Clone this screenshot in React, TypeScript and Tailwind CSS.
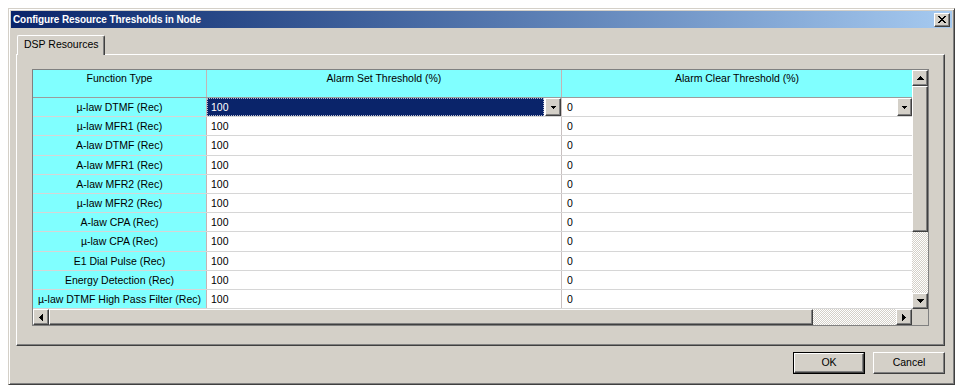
import React from "react";

const rows = [
  "µ-law DTMF (Rec)",
  "µ-law MFR1 (Rec)",
  "A-law DTMF (Rec)",
  "A-law MFR1 (Rec)",
  "A-law MFR2 (Rec)",
  "µ-law MFR2 (Rec)",
  "A-law CPA (Rec)",
  "µ-law CPA (Rec)",
  "E1 Dial Pulse (Rec)",
  "Energy Detection (Rec)",
  "µ-law DTMF High Pass Filter (Rec)",
];

const raised =
  "bg-[#d4d0c8] border border-t-white border-l-white border-r-[#404040] border-b-[#404040] shadow-[inset_-1px_-1px_0_#808080]";

function PixTri({ dir, size }: { dir: "up" | "down" | "left" | "right"; size: number }) {
  const rects: React.ReactNode[] = [];
  const base = size * 2 - 1;
  for (let i = 0; i < size; i++) {
    const len = dir === "up" || dir === "left" ? 2 * i + 1 : base - 2 * i;
    const off = (base - len) / 2;
    if (dir === "up" || dir === "down") {
      rects.push(<rect key={i} x={off} y={i} width={len} height={1} />);
    } else {
      rects.push(<rect key={i} x={i} y={off} width={1} height={len} />);
    }
  }
  const w = dir === "up" || dir === "down" ? base : size;
  const h = dir === "up" || dir === "down" ? size : base;
  return (
    <svg width={w} height={h} viewBox={`0 0 ${w} ${h}`} shapeRendering="crispEdges" fill="#000">
      {rects}
    </svg>
  );
}

function CloseX() {
  const pts = [
    [0, 0, 2], [6, 0, 2],
    [1, 1, 2], [5, 1, 2],
    [2, 2, 4],
    [3, 3, 2],
    [2, 4, 4],
    [1, 5, 2], [5, 5, 2],
    [0, 6, 2], [6, 6, 2],
  ];
  return (
    <svg width="8" height="7" viewBox="0 0 8 7" shapeRendering="crispEdges" fill="#000">
      {pts.map(([x, y, w], i) => (
        <rect key={i} x={x} y={y} width={w} height={1} />
      ))}
    </svg>
  );
}

const dither =
  "bg-[image:repeating-conic-gradient(#d4d0c8_0%_25%,#ffffff_0%_50%)] bg-[length:2px_2px]";

export default function App() {
  return (
    <div className="w-[961px] h-[388px] bg-white pl-[8px] pt-[8px] font-['Liberation_Sans',Arial,sans-serif] text-[10.5px] text-black overflow-hidden">
      <div className="w-[947px] h-[377px] bg-[#d4d0c8] border border-t-[#d4d0c8] border-l-[#d4d0c8] border-r-[#404040] border-b-[#404040] shadow-[inset_1px_1px_0_#fff,inset_-1px_-1px_0_#808080] p-[2px] flex flex-col">
        {/* Title bar */}
        <div className="h-[17px] flex items-center justify-between bg-gradient-to-r from-[#0a246a] to-[#a6caf0] pl-[2px] pr-[2px]">
          <span className="text-white font-bold text-[10px] leading-[13px] tracking-[-0.1px]">
            Configure Resource Thresholds in Node
          </span>
          <div className={`w-[16px] h-[14px] flex items-center justify-center ${raised}`}>
            <CloseX />
          </div>
        </div>

        {/* Body */}
        <div className="flex-1 flex flex-col pt-[7px]">
          {/* Tab */}
          <div className="relative z-10 ml-[6px] -mb-[1px] w-[88px] h-[20px] bg-[#d4d0c8] border-t border-l border-t-white border-l-white border-r border-r-[#404040] shadow-[inset_-1px_0_0_#808080] rounded-tl-[2px] rounded-tr-[2px] flex items-center pl-[6px] pb-[1px]">
            DSP Resources
          </div>

          {/* Panel */}
          <div className="ml-[5px] w-[929px] h-[292px] border border-t-white border-l-white border-r-[#404040] border-b-[#404040] shadow-[inset_-1px_-1px_0_#808080] pl-[15px] pt-[14px]">
            {/* Grid */}
            <div className="w-[897px] h-[257px] border border-[#808080] bg-white flex flex-col">
              <div className="flex h-[239px]">
                {/* Table */}
                <div className="w-[879px] flex flex-col">
                  {/* Header */}
                  <div className="h-[28px] flex bg-[#80ffff] border-b border-b-[#9c9c9c]">
                    <div className="w-[174px] border-r border-r-[#c4b4b4] text-center pt-[2px] leading-[12px]">
                      Function Type
                    </div>
                    <div className="w-[355px] border-r border-r-[#c4b4b4] text-center pt-[2px] leading-[12px]">
                      Alarm Set Threshold (%)
                    </div>
                    <div className="flex-1 text-center pt-[2px] leading-[12px]">
                      Alarm Clear Threshold (%)
                    </div>
                  </div>
                  {/* Rows */}
                  <div className="flex-1 flex flex-col">
                    {rows.map((name, i) => (
                      <div key={name} className="flex-1 min-h-0 flex border-b border-b-[#d6d6d6]">
                        <div className="w-[174px] bg-[#80ffff] border-r border-r-[#c4b4b4] flex items-center justify-center leading-[12px]">
                          {name}
                        </div>
                        <div className="w-[355px] border-r border-r-[#c8c0c0] flex items-stretch">
                          {i === 0 ? (
                            <>
                              <div className="flex-1 bg-[#0a246a] border border-dotted border-[#b8bcd0] text-white flex items-center pl-[3px] leading-[12px]">
                                100
                              </div>
                              <div className={`w-[16px] ml-[1px] flex items-center justify-center ${raised}`}>
                                <PixTri dir="down" size={3} />
                              </div>
                            </>
                          ) : (
                            <div className="flex-1 flex items-center pl-[4px] leading-[12px]">100</div>
                          )}
                        </div>
                        <div className="flex-1 flex items-stretch">
                          <div className="flex-1 flex items-center pl-[5px] leading-[12px]">0</div>
                          {i === 0 && (
                            <div className={`w-[15px] flex items-center justify-center ${raised}`}>
                              <PixTri dir="down" size={3} />
                            </div>
                          )}
                        </div>
                      </div>
                    ))}
                  </div>
                </div>
                {/* Vertical scrollbar */}
                <div className="w-[16px] flex flex-col">
                  <div className={`h-[16px] flex items-center justify-center ${raised}`}>
                    <PixTri dir="up" size={4} />
                  </div>
                  <div className={`h-[146px] ${raised}`} />
                  <div className={`flex-1 ${dither}`} />
                  <div className={`h-[16px] flex items-center justify-center ${raised}`}>
                    <PixTri dir="down" size={4} />
                  </div>
                </div>
              </div>
              {/* Horizontal scrollbar */}
              <div className="flex h-[16px]">
                <div className="w-[879px] flex">
                  <div className={`w-[16px] flex items-center justify-center ${raised}`}>
                    <PixTri dir="left" size={4} />
                  </div>
                  <div className={`w-[764px] ${raised}`} />
                  <div className={`flex-1 ${dither}`} />
                  <div className={`w-[16px] flex items-center justify-center ${raised}`}>
                    <PixTri dir="right" size={4} />
                  </div>
                </div>
                <div className="w-[16px] bg-[#d4d0c8]" />
              </div>
            </div>
          </div>

          {/* Buttons */}
          <div className="ml-[5px] w-[929px] mt-[6px] flex justify-end gap-[8px]">
            <div className="w-[72px] h-[22px] border border-black">
              <div className={`w-full h-full flex items-center justify-center ${raised}`}>OK</div>
            </div>
            <div className={`w-[72px] h-[22px] flex items-center justify-center ${raised}`}>Cancel</div>
          </div>
        </div>
      </div>
    </div>
  );
}
